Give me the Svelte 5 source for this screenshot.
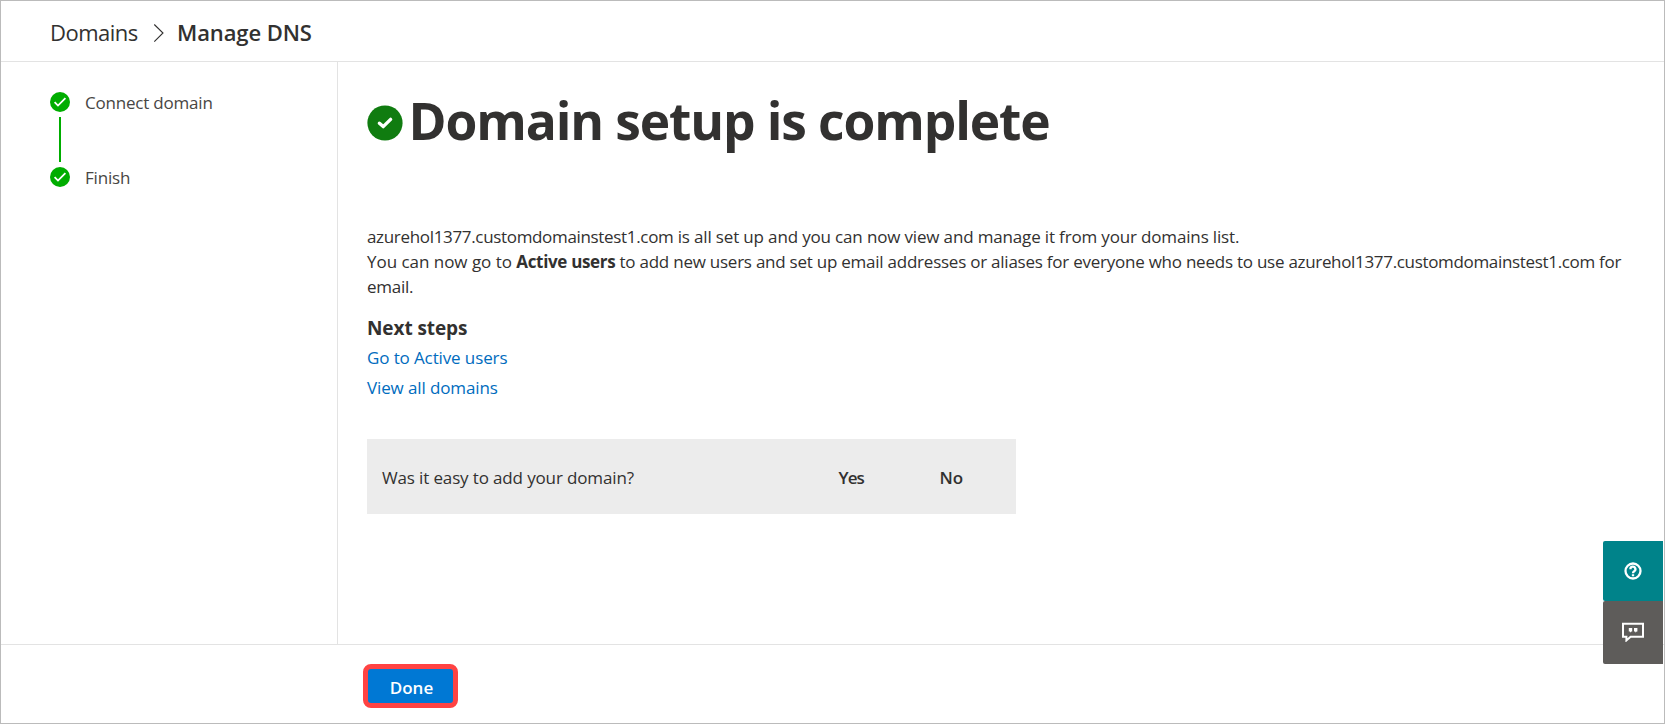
<script>
  const steps = ['Connect domain', 'Finish'];
  const domain = 'azurehol1377.customdomainstest1.com';
</script>

<div class="page">
  <header class="crumbs">
    <span class="crumb">Domains</span>
    <svg class="chev" width="12" height="20" viewBox="0 0 12 20"><path d="M1.3 1.5 10 10 1.3 18.7" /></svg>
    <span class="current">Manage DNS</span>
  </header>

  <div class="body">
    <nav class="steps">
      {#each steps as step, i}
        {#if i > 0}<div class="line"></div>{/if}
        <div class="step">
          <svg width="20" height="20" viewBox="0 0 20 20"><circle cx="10" cy="10" r="10" fill="#00ad00" /><path d="M4.6 10.2 8 13.6 15.4 6.2" fill="none" stroke="#fff" stroke-width="1.8" /></svg>
          <span>{step}</span>
        </div>
      {/each}
    </nav>

    <main>
      <h1>
        <svg width="36" height="36" viewBox="0 0 36 36"><circle cx="18" cy="18" r="17.6" fill="#107c10" /><path d="M12.4 18.2 16.2 21.6 23.6 14.4" fill="none" stroke="#fff" stroke-width="3.4" stroke-linecap="round" stroke-linejoin="round" /></svg>
        <span>Domain setup is complete</span>
      </h1>
      <p class="copy">
        <span class="first"><span class="domain">{domain}</span> is all set up and you can now view and manage it from your domains list.</span><br />
        <span class="lead">You can now go to{' '}</span><b>Active users</b><span class="rest">{' '}to add new users and set up email addresses or aliases for everyone who needs to use <span class="domain">{domain}</span> for</span><br />
        <span class="rest">email.</span>
      </p>
      <h2>Next steps</h2>
      <a href="#users">Go to Active users</a>
      <a href="#domains">View all domains</a>
      <section class="survey">
        <span class="question">Was it easy to add your domain?</span>
        <button class="yes">Yes</button>
        <button class="no">No</button>
      </section>
    </main>
  </div>

  <footer><button class="done">Done</button></footer>

  <aside>
    <button class="help" aria-label="Help"><svg width="18" height="18" viewBox="0 0 18 18"><circle cx="9" cy="9" r="7.5" /><path d="M6.4 7.3a2.5 2.5 0 1 1 3.8 2C9.4 9.8 9 10.1 9 11.2M9 12.2v2.1" /></svg></button>
    <button class="feedback" aria-label="Feedback"><svg width="22" height="20" viewBox="0 0 22 20"><path d="M1 1.7h20v13H8.6L4.4 18.4v-3.7H1z" /><path class="quotes" d="M6.8 6h3.4v3.4H9.4l-.6.9H7.8l.4-.9H6.8zM12 6h3.4v3.4h-.8l-.6.9H13l.4-.9H12z" /></svg></button>
  </aside>
</div>

<style>
  :global(body) {
    background: #fff;
  }
  .page {
    position: relative;
    box-sizing: border-box;
    width: 1665px;
    height: 724px;
    border: 1px solid #bbb;
    display: flex;
    flex-direction: column;
    overflow: hidden;
    font: 17px/25px "Open Sans", "Noto Sans", sans-serif;
    color: #323130;
    background: #fff;
  }
  button {
    border: 0;
    padding: 0;
    margin: 0;
    font: inherit;
    font-weight: 600;
    color: inherit;
    background: none;
    text-align: left;
  }
  .crumbs {
    flex: none;
    box-sizing: border-box;
    height: 61px;
    padding: 3px 0 0 49px;
    border-bottom: 1px solid #e3e3e3;
    display: flex;
    align-items: center;
    font-size: 22px;
  }
  .crumb {
    width: 88px;
    letter-spacing: -0.5px;
  }
  .chev {
    margin: 0 12px 0 15px;
    fill: none;
    stroke: #323130;
    stroke-width: 1.1;
  }
  .current {
    font-weight: 600;
    letter-spacing: -0.1px;
  }
  .body {
    flex: none;
    display: flex;
    height: 582px;
    border-bottom: 1px solid #e3e3e3;
  }
  .steps {
    flex: none;
    width: 337px;
    border-right: 1px solid #e3e3e3;
    box-sizing: border-box;
    padding: 30px 0 0 49px;
  }
  .step {
    display: flex;
    align-items: center;
    height: 20px;
    gap: 15px;
    color: #484644;
    letter-spacing: -0.2px;
  }
  .step span {
    padding-top: 1px;
  }
  .line {
    width: 2px;
    height: 45px;
    margin: 5px 9px;
    background: #00ad00;
  }
  main {
    padding: 24px 0 0 29px;
    display: flex;
    flex-direction: column;
    align-items: flex-start;
  }
  h1 {
    margin: 0;
    display: flex;
    align-items: center;
    gap: 5.5px;
    font-size: 51.5px;
    line-height: 68px;
    font-weight: 700;
    letter-spacing: -1.12px;
  }
  h1 svg {
    margin-top: 5px;
  }
  .copy {
    margin: 70px 0 0;
    white-space: nowrap;
  }
  .copy span {
    white-space: pre;
  }
  .first {
    letter-spacing: -0.16px;
  }
  .lead {
    letter-spacing: -0.03px;
  }
  .rest {
    letter-spacing: -0.24px;
  }
  .domain {
    letter-spacing: -0.33px;
  }
  b {
    letter-spacing: -0.33px;
  }
  h2 {
    margin: 17px 0 2px;
    font-size: 19px;
    line-height: 25px;
    letter-spacing: -0.08px;
  }
  a {
    color: #006cbe;
    text-decoration: none;
    line-height: 30px;
    letter-spacing: -0.12px;
  }
  .survey {
    box-sizing: border-box;
    width: 649px;
    height: 75px;
    margin-top: 36px;
    padding: 1px 0 0 15px;
    background: #ececec;
    display: grid;
    grid-template-columns: 456.5px 101px 60px;
    align-items: center;
  }
  .question {
    letter-spacing: -0.14px;
  }
  .yes {
    letter-spacing: -0.9px;
  }
  footer {
    padding: 19px 0 0 362px;
  }
  .done {
    display: block;
    box-sizing: border-box;
    width: 95px;
    height: 44px;
    padding: 2px 0 0 2px;
    background: #0078d4;
    border: 5px solid #ff4343;
    border-radius: 8px;
    color: #fff;
    text-align: center;
  }
  aside {
    position: absolute;
    right: 1px;
    top: 540px;
    display: flex;
    flex-direction: column;
  }
  aside button {
    width: 60px;
    height: 60px;
    display: flex;
    align-items: center;
    justify-content: center;
    background: #00838a;
    border-radius: 2px 0 0 2px;
  }
  aside svg {
    fill: none;
    stroke: #fff;
    stroke-width: 2;
  }
  .help svg {
    stroke-width: 2.3;
    margin-right: 1px;
  }
  aside .feedback {
    box-sizing: border-box;
    height: 63px;
    padding-bottom: 2px;
    background: #5e5c5a;
  }
  .quotes {
    fill: #fff;
    stroke: none;
  }
</style>
